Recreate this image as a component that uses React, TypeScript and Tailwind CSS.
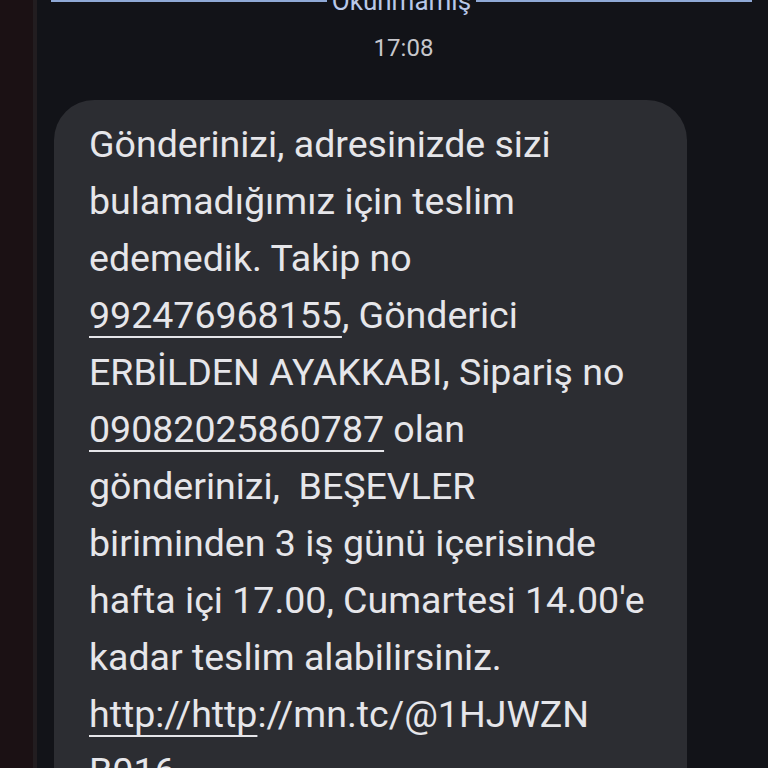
import React from "react";

const U = ({ children }: { children: React.ReactNode }) => (
  <span className="underline decoration-2 underline-offset-[8px]">{children}</span>
);

export default function App() {
  const font = { fontFamily: "Roboto, 'Noto Sans', sans-serif" };
  return (
    <div className="w-[768px] h-[768px] overflow-hidden flex bg-[#121318]" style={font}>
      <div className="w-[33px] h-full bg-[#1b1114]" />
      <div className="w-[4px] h-full bg-[#221d20]" />
      <div className="flex-1 flex flex-col">
        <div className="flex items-start mt-[-12px] pl-[14px] pr-[16px] h-[26px]">
          <div className="flex-1 h-[2px] mt-[12px] bg-[#8fa9d6]" />
          <div className="px-[5px] text-[26px] leading-[26px] text-[#b9c8e8]">Okunmamış</div>
          <div className="flex-1 h-[2px] mt-[12px] bg-[#8fa9d6]" />
        </div>
        <div className="text-center text-[24px] leading-[28px] text-[#c7c7cc] mt-[20px] pl-[2px]">17:08</div>
        <div className="mt-[38px] ml-[17px] w-[633px] flex-1 rounded-t-[40px] bg-[#2c2d32] pl-[35px] pt-[16px] text-[37.5px] leading-[57px] text-[#e6e6ea] whitespace-pre">
          <div>Gönderinizi, adresinizde sizi</div>
          <div>bulamadığımız için teslim</div>
          <div>edemedik. Takip no</div>
          <div><U>992476968155</U>, Gönderici</div>
          <div>ERBİLDEN AYAKKABI, Sipariş no</div>
          <div><U>09082025860787</U> olan</div>
          <div>gönderinizi,  BEŞEVLER</div>
          <div>biriminden 3 iş günü içerisinde</div>
          <div>hafta içi 17.00, Cumartesi 14.00'e</div>
          <div>kadar teslim alabilirsiniz.</div>
          <div><U>http://http</U>://mn.tc/@1HJWZN</div>
          <div>B016</div>
        </div>
      </div>
    </div>
  );
}
